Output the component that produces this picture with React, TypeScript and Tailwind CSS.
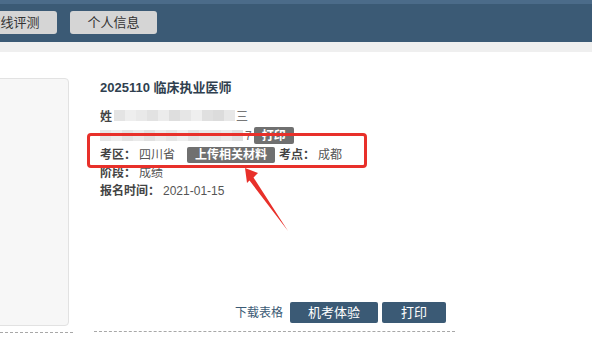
import React from 'react';

const font = { fontFamily: '"Liberation Sans", "Noto Sans CJK SC", sans-serif' };

// pixelated blur used to hide personal info
const Blur = ({ cells }: { cells: string[] }) => (
  <span className="inline-flex h-[11px] items-stretch">
    {cells.map((c, i) => (
      <span key={i} className="w-[11px]" style={{ background: c }} />
    ))}
  </span>
);

const line1 = ['#e4e4e4', '#eeeeee', '#e9e9e9', '#e2e2e2', '#ececec', '#dedede', '#e6e6e6', '#efefef', '#e0e0e0', '#dcdcdc', '#e8e8e8'];
const line2 = ['#e6e6e6', '#ededed', '#e3e3e3', '#eaeaea', '#e1e1e1', '#ebebeb', '#e5e5e5', '#eeeeee', '#e2e2e2', '#e9e9e9', '#e4e4e4', '#eaeaea', '#e0e0e0'];

const Label = ({ children }: { children: React.ReactNode }) => (
  <span className="font-bold text-[#444]">{children}</span>
);

const Badge = ({ children, className = '' }: { children: React.ReactNode; className?: string }) => (
  <span className={`inline-flex items-center justify-center rounded-[2px] bg-[#707070] text-white text-[12px] font-bold ${className}`}>
    {children}
  </span>
);

export default function App() {
  return (
    <div className="relative w-[592px] h-[362px] overflow-hidden bg-white" style={font}>
      {/* header bar */}
      <div className="h-[42px] bg-[#3b5a75] border-t-4 border-[#4b6b89] flex items-start pt-[7px] gap-[13px]">
        <button className="ml-[-30px] w-[87px] h-[23px] rounded-[3px] bg-[#d5d5d5] text-[13px] text-[#333]">在线评测</button>
        <button className="w-[87px] h-[23px] rounded-[3px] bg-[#d5d5d5] text-[13px] text-[#333]">个人信息</button>
      </div>
      <div className="h-[10px] bg-[#efefef]" />

      <div className="flex pt-[26px]">
        {/* left card */}
        <div className="w-[73px] shrink-0 flex flex-col">
          <div className="ml-[-10px] w-[79px] h-[248px] rounded-[4px] border border-[#e2e2e2] bg-[#f7f7f7]" />
          <div className="mt-[6px] border-t border-dashed border-[#a8a8a8]" />
        </div>

        {/* exam info */}
        <div className="ml-[21px] w-[361px] h-[254px] flex flex-col border-b border-dashed border-[#a8a8a8] pl-[6px] text-[12px] text-[#555]">
          <div className="h-[19px] leading-[19px] text-[13px] font-bold text-[#2f3f4f]">2025110 临床执业医师</div>
          <div className="mt-[10px] h-[19px] flex items-center">
            <Label>姓</Label>
            <span className="ml-[2px]"><Blur cells={line1} /></span>
            <span className="ml-[1px] text-[#777]">三</span>
          </div>
          <div className="h-[19px] flex items-center">
            <Blur cells={line2} />
            <span className="ml-[2px] text-[#666]">7</span>
            <Badge className="ml-[2px] w-[40px] h-[17px]">打印</Badge>
          </div>
          <div className="h-[19px] flex items-center">
            <Label>考区：</Label>
            <span className="ml-[3px]">四川省</span>
            <Badge className="ml-[12px] w-[88px] h-[16px]">上传相关材料</Badge>
            <span className="ml-[4px]"><Label>考点：</Label></span>
            <span className="ml-[3px]">成都</span>
          </div>
          <div className="h-[18px] flex items-center">
            <Label>阶段：</Label>
            <span className="ml-[3px]">成绩</span>
          </div>
          <div className="h-[17px] flex items-center">
            <Label>报名时间：</Label>
            <span className="ml-[3px]">2021-01-15</span>
          </div>

          <div className="mt-auto mb-[8px] pr-[9px] flex items-center justify-end gap-[4px]">
            <a className="mr-[3px] text-[12px] text-[#3b5a75]">下载表格</a>
            <button className="w-[88px] h-[21px] rounded-[2px] bg-[#3b5a75] text-white text-[13px]">机考体验</button>
            <button className="w-[64px] h-[21px] rounded-[2px] bg-[#3b5a75] text-white text-[13px]">打印</button>
          </div>
        </div>
      </div>

      {/* red annotation */}
      <div className="absolute left-[87px] top-[133px] w-[280px] h-[35px] rounded-[4px] border-[3px] border-[#e8302a]" />
      <svg className="absolute left-0 top-0 pointer-events-none" width="592" height="362">
        <polygon points="245,168 258,173 253.5,177.5 288,231 249.5,180.5 247,183" fill="#e8302a" />
      </svg>
    </div>
  );
}
